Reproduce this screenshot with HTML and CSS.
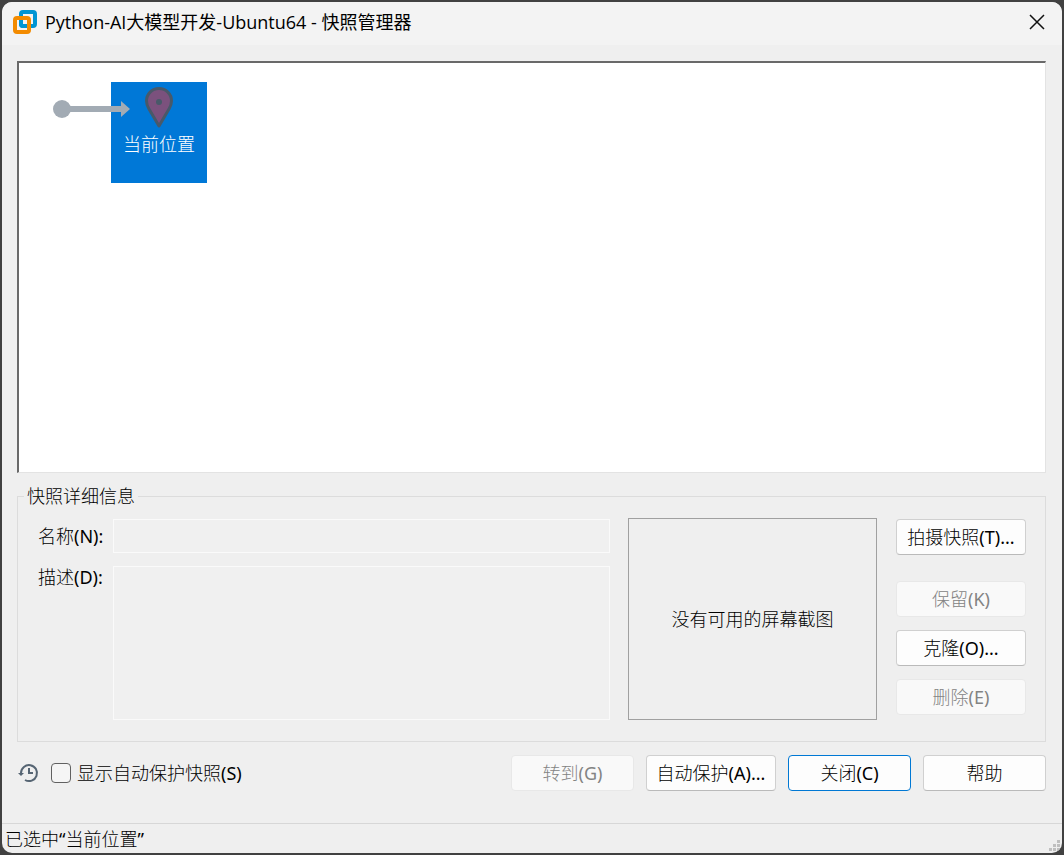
FILE: index.html
```html
<!DOCTYPE html>
<html lang="zh-CN">
<head>
  <meta charset="UTF-8" />
  <meta name="viewport" content="width=device-width, initial-scale=1.0" />
  <title>Python-AI大模型开发-Ubuntu64 - 快照管理器</title>
  <link rel="stylesheet" href="styles.css">
</head>
<body>
  <div class="window">
    <header class="title-bar">
      <svg class="app-icon" width="24" height="24" viewBox="0 0 24 24" fill="none" stroke-width="4">
        <rect x="8" y="2" width="14" height="14" rx="2" stroke="#0095d3" />
        <rect x="2" y="8" width="14" height="14" rx="2" stroke="#f38b00" />
        <path d="M8 11V14a2 2 0 0 0 2 2H13" stroke="#0095d3" />
      </svg>
      <h1>Python-AI大模型开发-Ubuntu64 - 快照管理器</h1>
      <button class="close-btn" id="close-btn" aria-label="关闭窗口">
        <svg width="16" height="16" viewBox="0 0 16 16" stroke="#111" stroke-width="1.5">
          <path d="M1 1L15 15M15 1L1 15" />
        </svg>
      </button>
    </header>

    <main>
      <div class="tree">
        <button class="node">
          <svg width="28" height="41" viewBox="0 0 28 41">
            <path d="M14 1.5C7 1.5 1.5 7 1.5 14C1.5 17 2.500 19.500 4 22L14 39L24 22C25.500 19.500 26.500 17 26.500 14C26.500 7 21 1.500 14 1.500Z" fill="#7b517d" stroke="#485969" stroke-width="3" stroke-linejoin="round" />
            <circle cx="14" cy="15" r="3" fill="#485969" />
          </svg>
          <span>当前位置</span>
        </button>
        <svg class="link" width="78" height="18" viewBox="0 0 78 18" fill="#a2abb4">
          <circle cx="9" cy="9" r="9" />
          <path d="M16 6H68V1L77 9L68 17V12H16Z" />
        </svg>
      </div>

      <fieldset class="details">
        <legend>快照详细信息</legend>
        <div class="details-row">
          <div class="fields">
            <label for="snapshot-name">名称(N):</label>
            <input type="text" id="snapshot-name" disabled />
            <label for="snapshot-desc">描述(D):</label>
            <textarea id="snapshot-desc" disabled></textarea>
          </div>
          <div class="preview">没有可用的屏幕截图</div>
          <div class="actions">
            <button class="btn take">拍摄快照(T)...</button>
            <button class="btn" disabled>保留(K)</button>
            <button class="btn">克隆(O)...</button>
            <button class="btn" disabled>删除(E)</button>
          </div>
        </div>
      </fieldset>

      <div class="bottom-bar">
        <svg width="22" height="20" viewBox="0 0 22 20" fill="none" stroke="#566573" stroke-width="2">
          <path d="M4 11V10A8 8 0 1 1 8 17" />
          <path d="M1 10H7L4 13Z" fill="#566573" stroke="none" />
          <path d="M12 5V10H16" />
        </svg>
        <input type="checkbox" id="show-auto" />
        <label for="show-auto">显示自动保护快照(S)</label>
        <div class="buttons">
          <button class="btn" disabled>转到(G)</button>
          <button class="btn wide">自动保护(A)...</button>
          <button class="btn default">关闭(C)</button>
          <button class="btn">帮助</button>
        </div>
      </div>
    </main>

    <footer class="status-bar">
      <p>已选中“当前位置”</p>
      <svg width="11" height="11" viewBox="0 0 11 11" fill="#bfbfbf">
        <path d="M8 0h3v3h-3zM4 4h3v3h-3zM8 4h3v3h-3zM0 8h3v3h-3zM4 8h3v3h-3zM8 8h3v3h-3z" />
      </svg>
    </footer>
  </div>
</body>
</html>
```
FILE: styles.css
```css
* {
  margin: 0;
  padding: 0;
  box-sizing: border-box;
}

body {
  display: flex;
  min-height: 100vh;
  padding: 2px;
  background: #414141;
  color: #000;
  font-family: "Noto Sans", "Noto Sans CJK SC Light", "Noto Sans CJK SC", sans-serif;
  font-size: 18px;
  line-height: 22px;
}

button,
input,
textarea {
  font: inherit;
  color: inherit;
}

svg {
  flex: none;
}

.window {
  flex: 1;
  display: flex;
  flex-direction: column;
  background: #efefef;
  border-radius: 10px;
  overflow: hidden;
}

/* title bar */
.title-bar {
  display: flex;
  align-items: center;
  height: 43px;
  padding: 0 8px 4px 11px;
  background: #f3f3f3;
}

.title-bar h1 {
  flex: 1;
  margin-left: 8px;
  font-family: "Open Sans", "Noto Sans CJK SC", sans-serif;
  font-size: 18px;
  font-weight: 400;
}

.close-btn {
  display: flex;
  align-items: center;
  justify-content: center;
  width: 34px;
  height: 34px;
  border: none;
  background: none;
}

main {
  flex: 1;
  display: flex;
  flex-direction: column;
  padding: 16px 16px 32px 15px;
}

/* snapshot tree */
.tree {
  position: relative;
  flex: 1;
  min-height: 140px;
  background: #fff;
  border: 2px solid #696969;
  border-right: 1px solid #e3e3e3;
  border-bottom: 1px solid #e3e3e3;
}

.node {
  position: absolute;
  left: 92px;
  top: 19px;
  display: flex;
  flex-direction: column;
  align-items: center;
  gap: 5px;
  width: 96px;
  height: 101px;
  padding-top: 5px;
  border: none;
  background: #0078d7;
  color: #fff;
}

.link {
  position: absolute;
  left: 34px;
  top: 37px;
}

/* details group */
.details {
  margin-top: 12px;
  padding: 11px 19px 21px 20px;
  border: 1px solid #dcdcdc;
}

.details legend {
  margin-left: -14px;
  padding: 0 3px;
}

.details-row {
  display: flex;
}

.fields {
  flex: 1;
  display: grid;
  grid-template-columns: 66px 1fr;
  grid-template-rows: 34px 154px;
  gap: 13px 9px;
  margin-top: 1px;
}

.fields label {
  padding-top: 6px;
  white-space: nowrap;
}

.fields label[for="snapshot-desc"] {
  padding-top: 0;
}

.fields input,
.fields textarea {
  width: 100%;
  height: 100%;
  padding: 4px;
  border: 1px solid #fafafa;
  background: #f0f0f0;
  resize: none;
}

.preview {
  display: flex;
  align-items: center;
  justify-content: center;
  width: 249px;
  margin: 0 19px 0 18px;
  border: 1px solid #a0a0a0;
}

.actions {
  display: flex;
  flex-direction: column;
  gap: 13px;
  width: 130px;
  margin-top: 1px;
}

.btn {
  height: 36px;
  border: 1px solid #d0d0d0;
  border-bottom-color: #bababa;
  border-radius: 4px;
  background: #fdfdfd;
  white-space: nowrap;
}

.btn:disabled {
  border-color: #e8e8e8;
  background: #f9f9f9;
  color: #838383;
}

.btn.take {
  margin-bottom: 13px;
}

.btn.default {
  border-color: #0078d4;
}

/* bottom row */
.bottom-bar {
  display: flex;
  align-items: center;
  margin-top: 13px;
}

.bottom-bar input {
  appearance: none;
  width: 20px;
  height: 20px;
  margin: 0 6px 0 12px;
  border: 1px solid #616161;
  border-radius: 4px;
  background: #f5f5f5;
}

.buttons {
  display: flex;
  gap: 12px;
  margin-left: auto;
}

.buttons .btn {
  width: 123px;
}

.buttons .btn.wide {
  width: 130px;
}

/* status bar */
.status-bar {
  display: flex;
  align-items: flex-end;
  justify-content: space-between;
  height: 30px;
  padding: 0 2px 2px 3px;
  border-top: 1px solid #d7d7d7;
}

.status-bar p {
  padding-bottom: 1px;
}
```
